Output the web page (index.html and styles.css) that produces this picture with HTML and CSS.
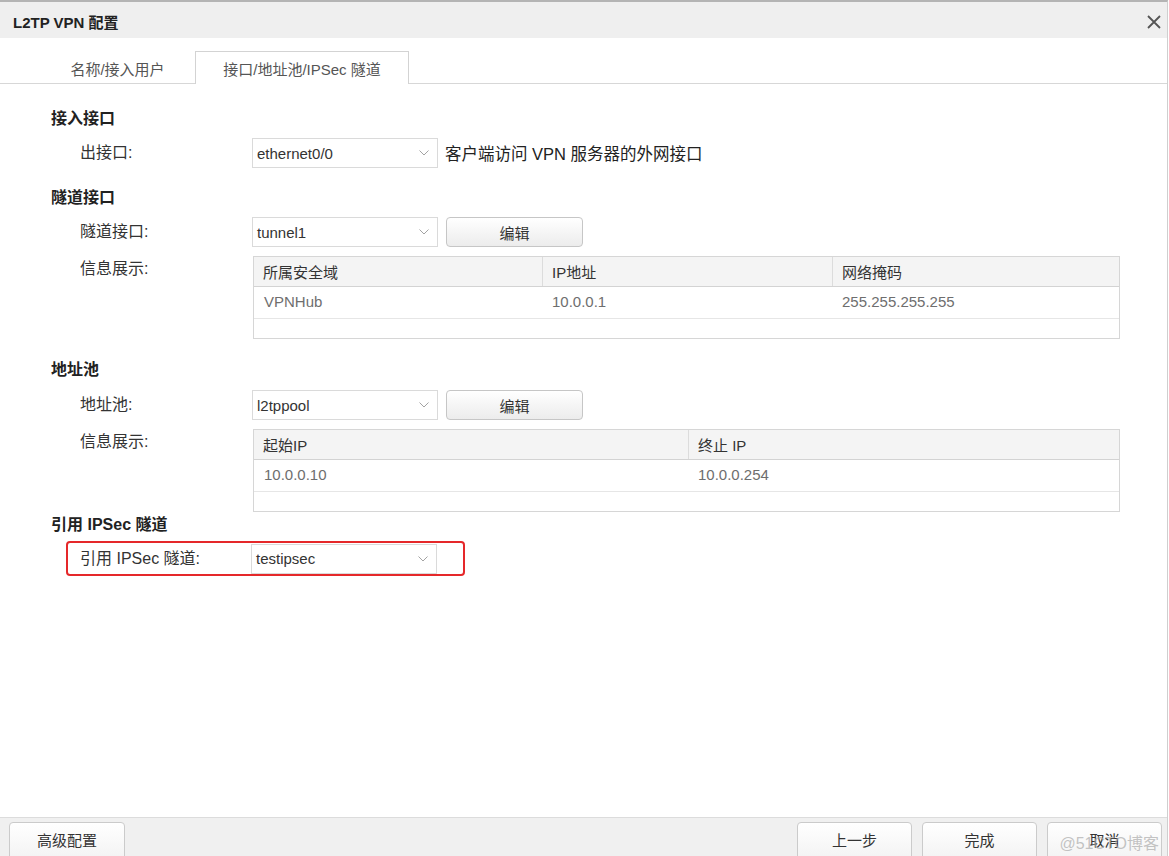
FILE: index.html
```html
<!DOCTYPE html>
<html lang="zh-CN">
<head>
<meta charset="utf-8">
<title>L2TP VPN 配置</title>
<link rel="stylesheet" href="styles.css">
</head>
<body>
<div class="dialog">
  <div class="titlebar">
    <span class="title">L2TP VPN 配置</span>
    <svg class="close" width="14" height="14" viewBox="0 0 14 14"><path d="M1 1L13 13M13 1L1 13" stroke="#555" stroke-width="1.8" fill="none"/></svg>
  </div>
  <div class="tabs">
    <div class="tab">名称/接入用户</div>
    <div class="tab active">接口/地址池/IPSec 隧道</div>
  </div>
  <div class="content">
    <div class="heading h-first">接入接口</div>
    <div class="row r-first">
      <span class="label">出接口:</span>
      <div class="select"><span>ethernet0/0</span><svg class="chev" width="10" height="6" viewBox="0 0 10 6"><path d="M0.5 0.5L5 5L9.5 0.5" stroke="#a3a3a3" stroke-width="1" fill="none"/></svg></div>
      <span class="hint">客户端访问 VPN 服务器的外网接口</span>
    </div>

    <div class="heading h-tunnel">隧道接口</div>
    <div class="row r-first">
      <span class="label">隧道接口:</span>
      <div class="select"><span>tunnel1</span><svg class="chev" width="10" height="6" viewBox="0 0 10 6"><path d="M0.5 0.5L5 5L9.5 0.5" stroke="#a3a3a3" stroke-width="1" fill="none"/></svg></div>
      <button class="btn edit">编辑</button>
    </div>
    <div class="row info">
      <span class="label info-label">信息展示:</span>
      <div class="table cols-3">
        <div class="tr thead"><div class="th">所属安全域</div><div class="th">IP地址</div><div class="th">网络掩码</div></div>
        <div class="tr tdata"><div class="td">VPNHub</div><div class="td">10.0.0.1</div><div class="td">255.255.255.255</div></div>
        <div class="tr tempty"></div>
      </div>
    </div>

    <div class="heading h-pool">地址池</div>
    <div class="row r-pool">
      <span class="label">地址池:</span>
      <div class="select"><span>l2tppool</span><svg class="chev" width="10" height="6" viewBox="0 0 10 6"><path d="M0.5 0.5L5 5L9.5 0.5" stroke="#a3a3a3" stroke-width="1" fill="none"/></svg></div>
      <button class="btn edit">编辑</button>
    </div>
    <div class="row info">
      <span class="label info-label">信息展示:</span>
      <div class="table cols-2">
        <div class="tr thead"><div class="th">起始IP</div><div class="th">终止 IP</div></div>
        <div class="tr tdata"><div class="td">10.0.0.10</div><div class="td">10.0.0.254</div></div>
        <div class="tr tempty"></div>
      </div>
    </div>

    <div class="heading h-ipsec">引用 IPSec 隧道</div>
    <div class="row highlight">
      <span class="label hl-label">引用 IPSec 隧道:</span>
      <div class="select"><span>testipsec</span><svg class="chev" width="10" height="6" viewBox="0 0 10 6"><path d="M0.5 0.5L5 5L9.5 0.5" stroke="#a3a3a3" stroke-width="1" fill="none"/></svg></div>
    </div>
  </div>
  <div class="footer">
    <button class="btn fbtn fbtn-left">高级配置</button>
    <div class="spacer"></div>
    <button class="btn fbtn">上一步</button>
    <button class="btn fbtn">完成</button>
    <button class="btn fbtn">取消</button>
    <span class="watermark">@51CTO博客</span>
  </div>
</div>
</body>
</html>
```

FILE: styles.css
```css
* { box-sizing: border-box; }
html, body { margin: 0; padding: 0; background: #fff; }
body {
  font-family: "Liberation Sans", "Noto Sans CJK SC", Arial, sans-serif;
  font-size: 15px;
  color: #333;
  width: 1169px;
  height: 856px;
  overflow: hidden;
}
.dialog {
  width: 1168px;
  height: 856px;
  border-top: 2px solid #b4b4b4;
  border-right: 1px solid #cfcfcf;
  display: flex;
  flex-direction: column;
  overflow: hidden;
  position: relative;
}
.titlebar {
  height: 36px;
  background: #efefef;
  display: flex;
  align-items: center;
  justify-content: space-between;
  padding: 3px 6px 0 13px;
}
.title { font-weight: bold; font-size: 15px; color: #222; }
.close { display: block; margin-right: 0; }
.tabs {
  height: 46px;
  border-bottom: 1px solid #d7d7d7;
  display: flex;
  align-items: flex-end;
  padding-left: 40px;
}
.tab {
  height: 32px;
  width: 155px;
  display: flex;
  align-items: center;
  justify-content: center;
  color: #555;
  font-size: 15px;
  margin-bottom: -1px;
  border: 1px solid transparent;
  border-bottom: none;
}
.tab.active {
  width: 214px;
  background: #fff;
  border-color: #d3d3d3;
  height: 33px;
}
.content { flex: 1; padding-left: 51px; }
.heading {
  font-weight: bold;
  font-size: 16px;
  line-height: 20px;
  color: #222;
}
.h-first { margin-top: 25px; }
.h-tunnel { margin-top: 20px; }
.h-pool { margin-top: 21px; }
.h-ipsec { margin-top: 3px; }
.row {
  display: flex;
  align-items: center;
  padding-left: 29px;
}
.r-first { margin-top: 9px; }
.r-pool { margin-top: 10px; }
.label {
  width: 172px;
  font-size: 16px;
  color: #333;
  line-height: 20px;
  flex: none;
}
.select {
  width: 186px;
  height: 30px;
  border: 1px solid #dadada;
  background: #fff;
  display: flex;
  align-items: center;
  justify-content: space-between;
  padding: 0 8px 0 4px;
  font-size: 15px;
  color: #333;
  flex: none;
}
.chev { display: block; }
.hint { margin-left: 7px; font-size: 16.5px; color: #222; }
.btn {
  font-family: inherit;
  font-size: 15px;
  color: #333;
  border: 1px solid #c6c6c6;
  border-radius: 4px;
  background: linear-gradient(#ffffff, #ececec);
  padding: 0;
  cursor: default;
}
.edit { width: 137px; height: 30px; margin-left: 8px; }
.info { margin-top: 9px; align-items: flex-start; }
.info-label { width: 173px; padding-top: 3px; }
.table {
  width: 867px;
  border: 1px solid #d6d6d6;
}
.tr { display: grid; }
.cols-3 .tr { grid-template-columns: 288px 290px 1fr; }
.cols-2 .tr { grid-template-columns: 434px 1fr; }
.thead {
  height: 30px;
  background: #f4f4f4;
  border-bottom: 1px solid #d3d3d3;
}
.th {
  display: flex;
  align-items: center;
  padding-left: 9px;
  color: #333;
  font-size: 15px;
  border-left: 1px solid #dcdcdc;
}
.th:first-child { border-left: none; }
.tdata { height: 32px; border-bottom: 1px solid #e6e6e6; }
.td {
  display: flex;
  align-items: center;
  padding-left: 10px;
  padding-bottom: 2px;
  color: #6e6e6e;
  font-size: 15px;
}
.tempty { height: 19px; }
.highlight {
  margin-top: 6px;
  margin-left: 15px;
  width: 399px;
  height: 35px;
  border: 2px solid #e5282a;
  border-radius: 4px;
  padding-left: 12px;
}
.hl-label { width: 171px; }
.footer {
  height: 39px;
  flex: none;
  background: #f0f0f0;
  border-top: 1px solid #dcdcdc;
  display: flex;
  align-items: flex-start;
  padding: 4px 5px 0 9px;
  gap: 10px;
  position: relative;
}
.spacer { flex: 1; }
.fbtn {
  width: 115px;
  height: 38px;
  flex: none;
  background: linear-gradient(#ffffff, #f3f3f3);
  border-color: #cbcbcb;
  padding-bottom: 4px;
}
.fbtn-left { width: 116px; }
.watermark {
  position: absolute;
  right: 8px;
  top: 12px;
  font-size: 16px;
  color: rgba(170, 170, 170, 0.7);
  pointer-events: none;
}
```
